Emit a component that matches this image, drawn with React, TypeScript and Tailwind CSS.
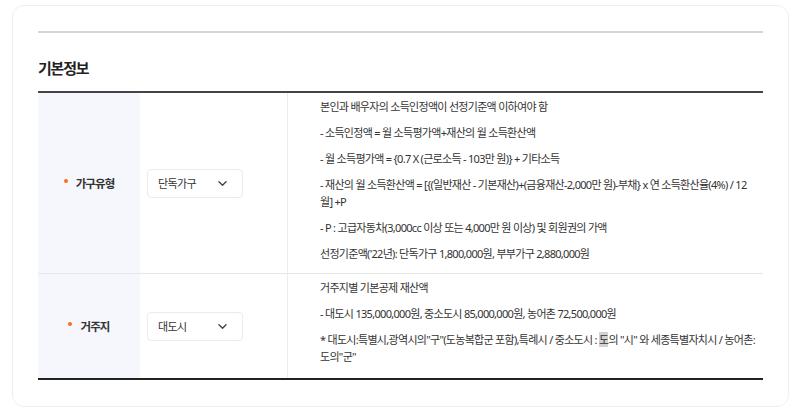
const font = { fontFamily: '"Noto Sans", "Noto Sans CJK KR", sans-serif' };

function Chevron() {
  return (
    <svg width="9" height="5" viewBox="0 0 9 5" fill="none" className="mr-[2px] shrink-0">
      <path d="M1 0.8l3.5 3.4 3.5-3.4" stroke="#444" strokeWidth="1.4" strokeLinecap="round" strokeLinejoin="round" />
    </svg>
  );
}

function Select({ value }: { value: string }) {
  return (
    <div className="flex h-[29px] w-[96px] items-center justify-between rounded-[4px] border border-[#ebebeb] bg-white pl-[10px] pr-[13px]">
      <span className="text-[11px] tracking-[-0.6px] text-[#333]">{value}</span>
      <Chevron />
    </div>
  );
}

function Label({ text }: { text: string }) {
  return (
    <div className="flex w-[102px] shrink-0 items-center justify-center bg-[#f5f7fc]">
      <span className="mr-[8px] mt-[-5px] h-[4px] w-[4px] rounded-full bg-[#ff6b1a]" />
      <span className="text-[11.5px] font-bold tracking-[-0.9px] text-[#333]">{text}</span>
    </div>
  );
}

export default function App() {
  const row1 = [
    '본인과 배우자의 소득인정액이 선정기준액 이하여야 함',
    '- 소득인정액 = 월 소득평가액+재산의 월 소득환산액',
    '- 월 소득평가액 = {0.7 X (근로소득 - 103만 원)} + 기타소득',
    '- 재산의 월 소득환산액 = [{(일반재산 - 기본재산)+(금융재산-2,000만 원)-부채} x 연 소득환산율(4%) / 12 월] +P',
    '- P : 고급자동차(3,000cc 이상 또는 4,000만 원 이상) 및 회원권의 가액',
    "선정기준액('22년): 단독가구 1,800,000원, 부부가구 2,880,000원",
  ];

  return (
    <div className="min-h-[414px] bg-white pl-[12px] pt-[5px]" style={font}>
      <div className="h-[402px] w-[777px] rounded-[12px] border border-[#efefef] bg-white px-[25px] pt-[25px]">
        <div className="h-[2px] bg-[#d6d6d6]" />
        <h2 className="mt-[23px] mb-[11px] text-[15px] font-bold leading-[24px] tracking-[-1.2px] text-[#222]">기본정보</h2>

        <div className="border-t-2 border-b-2 border-t-[#444] border-b-[#222] text-[11px] leading-[17px] tracking-[-0.7px] text-[#333]">
          {/* 가구유형 */}
          <div className="flex h-[181px] border-b border-[#e6e6e6]">
            <Label text="가구유형" />
            <div className="flex w-[148px] shrink-0 items-center border-r border-[#ececec] pl-[7px]">
              <Select value="단독가구" />
            </div>
            <div className="flex flex-1 flex-col gap-[9px] pl-[32px] pr-[6px] pt-[5px]">
              {row1.map((t) => (
                <p key={t}>{t}</p>
              ))}
            </div>
          </div>

          {/* 거주지 */}
          <div className="flex h-[104px]">
            <Label text="거주지" />
            <div className="flex w-[148px] shrink-0 items-center border-r border-[#ececec] pl-[7px]">
              <Select value="대도시" />
            </div>
            <div className="flex flex-1 flex-col gap-[9px] pl-[32px] pr-[6px] pt-[5px]">
              <p>거주지별 기본공제 재산액</p>
              <p>- 대도시 135,000,000원, 중소도시 85,000,000원, 농어촌 72,500,000원</p>
              <p>
                * 대도시:특별시,광역시의"구"(도농복합군 포함),특례시 / 중소도시 : <mark className="bg-[#d2d2d2] text-[#333]">도</mark>의 "시" 와 세종특별자치시 / 농어촌: 도의"군"
              </p>
            </div>
          </div>
        </div>
      </div>
    </div>
  );
}
